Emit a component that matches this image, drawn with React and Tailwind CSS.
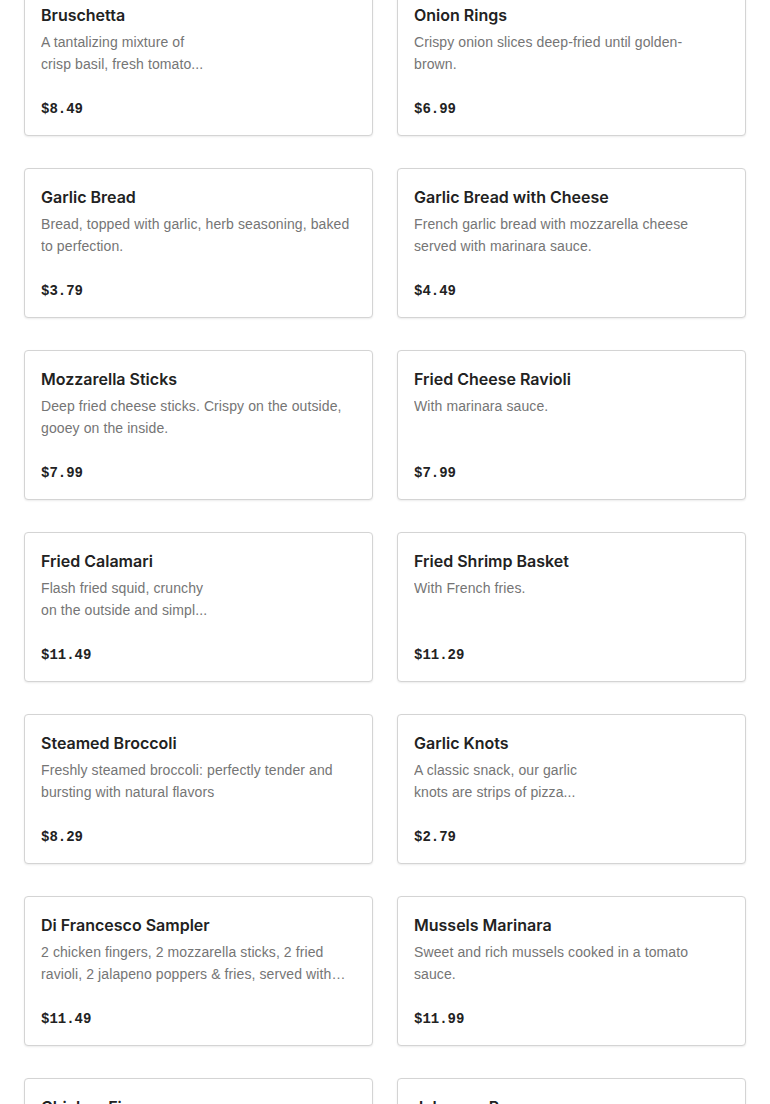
const items = [
  { name: "Bruschetta", lines: ["A tantalizing mixture of", "crisp basil, fresh tomato..."], price: "$8.49" },
  { name: "Onion Rings", lines: ["Crispy onion slices deep-fried until golden-", "brown."], price: "$6.99" },
  { name: "Garlic Bread", desc: "Bread, topped with garlic, herb seasoning, baked to perfection.", price: "$3.79" },
  { name: "Garlic Bread with Cheese", desc: "French garlic bread with mozzarella cheese served with marinara sauce.", price: "$4.49" },
  { name: "Mozzarella Sticks", desc: "Deep fried cheese sticks. Crispy on the outside, gooey on the inside.", price: "$7.99" },
  { name: "Fried Cheese Ravioli", desc: "With marinara sauce.", price: "$7.99" },
  { name: "Fried Calamari", lines: ["Flash fried squid, crunchy", "on the outside and simpl..."], price: "$11.49" },
  { name: "Fried Shrimp Basket", desc: "With French fries.", price: "$11.29" },
  { name: "Steamed Broccoli", desc: "Freshly steamed broccoli: perfectly tender and bursting with natural flavors", price: "$8.29" },
  { name: "Garlic Knots", lines: ["A classic snack, our garlic", "knots are strips of pizza..."], price: "$2.79" },
  { name: "Di Francesco Sampler", desc: "2 chicken fingers, 2 mozzarella sticks, 2 fried ravioli, 2 jalapeno poppers & fries, served with marinara sauce.", price: "$11.49" },
  { name: "Mussels Marinara", desc: "Sweet and rich mussels cooked in a tomato sauce.", price: "$11.99" },
  { name: "Chicken Fingers", desc: "Crispy breaded chicken tenders served with fries.", price: "$9.99" },
  { name: "Jalapeno Poppers", desc: "Jalapenos stuffed with cheese, breaded and fried.", price: "$7.99" },
];

function MenuCard({ item }) {
  return (
    <div className="h-[150px] rounded-[4px] border border-[#d4d4d4] bg-white px-4 pt-4 shadow-[0_1px_2px_rgba(0,0,0,0.08)]">
      <h3 className="text-[16px] leading-[25px] font-semibold text-[#222] font-['Inter',sans-serif]">{item.name}</h3>
      <div className="mt-[3px] h-[44px] overflow-hidden text-[14px] leading-[22px] text-[#757575] font-['Liberation_Sans',sans-serif] tracking-[0.1px]">
        {item.lines ? (
          item.lines.map((l, i) => (
            <div key={i} className="whitespace-nowrap">{l}</div>
          ))
        ) : (
          <p className="line-clamp-2">{item.desc}</p>
        )}
      </div>
      <div className="mt-[23px] text-[14px] leading-[22px] font-bold text-[#222] font-['Liberation_Mono',monospace]">
        {item.price}
      </div>
    </div>
  );
}

export default function App() {
  return (
    <div className="h-[1104px] overflow-hidden bg-white">
      <div className="-mt-[14px] grid grid-cols-2 gap-x-6 gap-y-8 px-6">
        {items.map((item) => (
          <MenuCard key={item.name} item={item} />
        ))}
      </div>
    </div>
  );
}
